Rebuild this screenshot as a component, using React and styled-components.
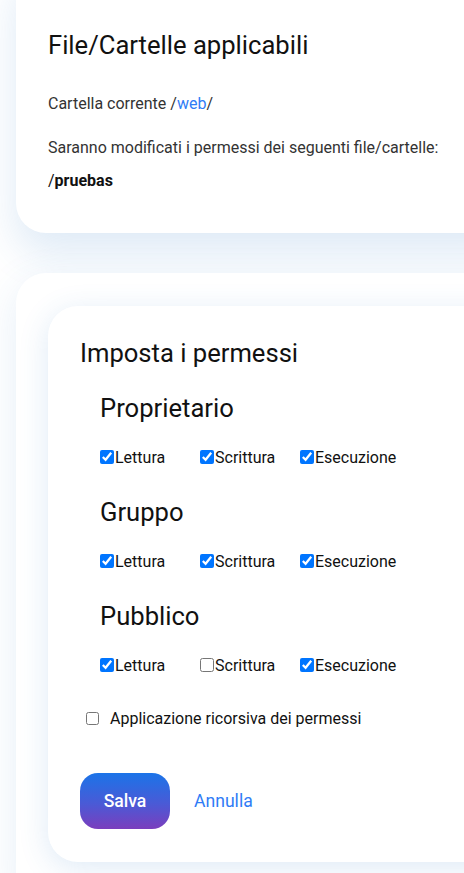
import React from "react";
import styled, { createGlobalStyle } from "styled-components";

const GlobalStyle = createGlobalStyle`
  html, body {
    margin: 0;
    padding: 0;
    background: #ffffff;
    font-family: Roboto, "Liberation Sans", sans-serif;
    color: #111;
  }
  * { box-sizing: border-box; }
`;

const groups = [
  { name: "Proprietario", perms: [true, true, true] },
  { name: "Gruppo", perms: [true, true, true] },
  { name: "Pubblico", perms: [true, false, true] },
];

const permNames = ["Lettura", "Scrittura", "Esecuzione"];

const App = () => {
  return (
    <React.Fragment>
      <GlobalStyle />
      <Page>
        <Card>
          <Title>File/Cartelle applicabili</Title>
          <Text>
            Cartella corrente /<Link href="#web">web</Link>/
          </Text>
          <Text>Saranno modificati i permessi dei seguenti file/cartelle:</Text>
          <FileName>
            /<b>pruebas</b>
          </FileName>
        </Card>

        <Outer>
          <Inner>
            <SectionTitle>Imposta i permessi</SectionTitle>
            {groups.map((g) => (
              <Group key={g.name}>
                <GroupTitle>{g.name}</GroupTitle>
                <PermRow>
                  {permNames.map((p, i) => (
                    <Perm key={p}>
                      <Check type="checkbox" defaultChecked={g.perms[i]} />
                      {p}
                    </Perm>
                  ))}
                </PermRow>
              </Group>
            ))}
            <Recursive>
              <Check type="checkbox" $small />
              Applicazione ricorsiva dei permessi
            </Recursive>
            <Actions>
              <SaveButton>Salva</SaveButton>
              <CancelLink href="#annulla">Annulla</CancelLink>
            </Actions>
          </Inner>
        </Outer>
      </Page>
    </React.Fragment>
  );
};

export default App;

const Page = styled.div`
  width: 464px;
  height: 873px;
  overflow: hidden;
  padding-left: 16px;
`;

const Card = styled.div`
  margin-top: -40px;
  margin-right: -60px;
  padding: 70px 32px 42px;
  background: #fff;
  border-radius: 30px;
  box-shadow: 0 20px 40px rgba(50, 125, 200, 0.16);
`;

const Title = styled.h2`
  margin: 0 0 34px;
  font-size: 25.6px;
  font-weight: 400;
  line-height: 30px;
  color: #111;
`;

const Text = styled.p`
  margin: 0 0 24px;
  font-size: 16px;
  line-height: 20px;
  color: #333;
`;

const Link = styled.a`
  color: #2f7cf6;
  text-decoration: none;
`;

const FileName = styled.p`
  margin: -11px 0 0;
  font-size: 16px;
  line-height: 20px;
  color: #111;

  b {
    font-weight: 700;
  }
`;

const Outer = styled.div`
  margin-top: 40px;
  margin-right: -60px;
  padding: 33px 0 40px 32px;
  background: #fff;
  border-radius: 30px;
  box-shadow: 0 10px 40px rgba(50, 125, 200, 0.12);
`;

const Inner = styled.div`
  padding: 31px 32px 33px;
  background: #fff;
  border-radius: 30px;
  box-shadow: 0 6px 30px rgba(50, 125, 200, 0.16);
`;

const SectionTitle = styled.h3`
  margin: 0 0 24px;
  font-size: 25.6px;
  font-weight: 400;
  line-height: 32px;
`;

const Group = styled.div`
  padding-left: 20px;
  margin-bottom: 28px;
`;

const GroupTitle = styled.h4`
  margin: 0 0 22px;
  font-size: 25.6px;
  font-weight: 400;
  line-height: 30px;
`;

const PermRow = styled.div`
  display: flex;
  height: 24px;
  align-items: center;
`;

const Perm = styled.label`
  width: 100px;
  display: flex;
  align-items: center;
  font-size: 16px;
  color: #111;
`;

const Check = styled.input`
  width: ${(p) => (p.$small ? "13px" : "14px")};
  height: ${(p) => (p.$small ? "13px" : "14px")};
  margin: 0 1px 0 0;
`;

const Recursive = styled.label`
  display: flex;
  align-items: center;
  gap: 10px;
  margin: 31px 0 0 6px;
  height: 20px;
  font-size: 16px;
  color: #111;
`;

const Actions = styled.div`
  display: flex;
  align-items: center;
  gap: 24px;
  margin-top: 45px;
`;

const SaveButton = styled.button`
  width: 90px;
  height: 56px;
  border: none;
  border-radius: 18px;
  background: linear-gradient(180deg, #1b74e8 0%, #4a5ad6 55%, #7b3ebd 100%);
  color: #fff;
  font-family: Roboto, "Liberation Sans", sans-serif;
  font-size: 17.6px;
  font-weight: 500;
  cursor: pointer;
`;

const CancelLink = styled.a`
  font-size: 17.6px;
  color: #2f7cf6;
  text-decoration: none;
`;
